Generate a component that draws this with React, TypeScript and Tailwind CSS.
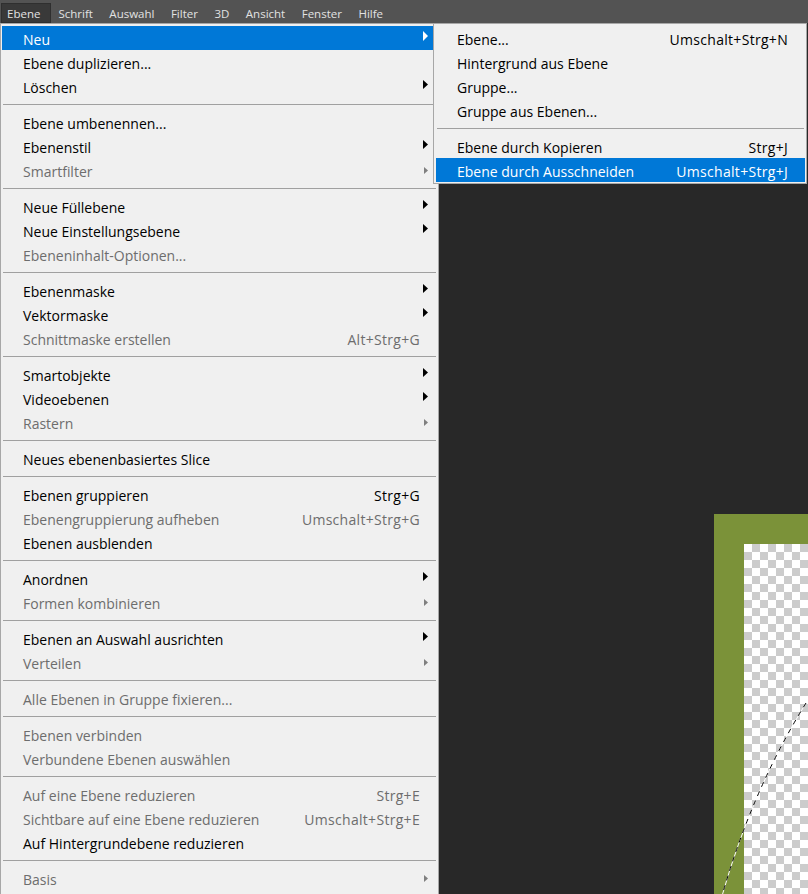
import React from "react";

type Row = { label: string; sc?: string; sub?: boolean; dis?: boolean; hl?: boolean };
type Entry = Row | "sep";

const mainItems: Entry[] = [
  { label: "Neu", sub: true, hl: true },
  { label: "Ebene duplizieren..." },
  { label: "Löschen", sub: true },
  "sep",
  { label: "Ebene umbenennen..." },
  { label: "Ebenenstil", sub: true },
  { label: "Smartfilter", sub: true, dis: true },
  "sep",
  { label: "Neue Füllebene", sub: true },
  { label: "Neue Einstellungsebene", sub: true },
  { label: "Ebeneninhalt-Optionen...", dis: true },
  "sep",
  { label: "Ebenenmaske", sub: true },
  { label: "Vektormaske", sub: true },
  { label: "Schnittmaske erstellen", sc: "Alt+Strg+G", dis: true },
  "sep",
  { label: "Smartobjekte", sub: true },
  { label: "Videoebenen", sub: true },
  { label: "Rastern", sub: true, dis: true },
  "sep",
  { label: "Neues ebenenbasiertes Slice" },
  "sep",
  { label: "Ebenen gruppieren", sc: "Strg+G" },
  { label: "Ebenengruppierung aufheben", sc: "Umschalt+Strg+G", dis: true },
  { label: "Ebenen ausblenden" },
  "sep",
  { label: "Anordnen", sub: true },
  { label: "Formen kombinieren", sub: true, dis: true },
  "sep",
  { label: "Ebenen an Auswahl ausrichten", sub: true },
  { label: "Verteilen", sub: true, dis: true },
  "sep",
  { label: "Alle Ebenen in Gruppe fixieren...", dis: true },
  "sep",
  { label: "Ebenen verbinden", dis: true },
  { label: "Verbundene Ebenen auswählen", dis: true },
  "sep",
  { label: "Auf eine Ebene reduzieren", sc: "Strg+E", dis: true },
  { label: "Sichtbare auf eine Ebene reduzieren", sc: "Umschalt+Strg+E", dis: true },
  { label: "Auf Hintergrundebene reduzieren" },
  "sep",
  { label: "Basis", sub: true, dis: true },
];

const subItems: Entry[] = [
  { label: "Ebene...", sc: "Umschalt+Strg+N" },
  { label: "Hintergrund aus Ebene" },
  { label: "Gruppe..." },
  { label: "Gruppe aus Ebenen..." },
  "sep",
  { label: "Ebene durch Kopieren", sc: "Strg+J" },
  { label: "Ebene durch Ausschneiden", sc: "Umschalt+Strg+J", hl: true },
];

function Arrow({ row }: { row: Row }) {
  if (row.dis) {
    return (
      <svg width="4" height="7" viewBox="0 0 4 7" className="mt-[9px] ml-[4px] block">
        <polygon points="0,0 4,3.5 0,7" fill="#7f7f7f" />
      </svg>
    );
  }
  if (row.hl) {
    return (
      <svg width="5" height="10" viewBox="0 0 5 10" className="mt-[5px] ml-[3px] block">
        <polygon points="0,0 5,5 0,10" fill="#ffffff" />
      </svg>
    );
  }
  return (
    <svg width="5" height="9" viewBox="0 0 5 9" className="mt-[6px] ml-[3px] block">
      <polygon points="0,0 5,4.5 0,9" fill="#000000" />
    </svg>
  );
}

function MenuRow({ row, main }: { row: Row; main: boolean }) {
  const color = row.hl ? "text-white" : row.dis ? "text-[#6d6d6d]" : "text-black";
  const bg = row.hl ? "bg-[#0078d7]" : "";
  return (
    <div className={`flex h-[24px] items-start pl-[21px] ${main ? "pr-[1px]" : "pr-[17px]"} ${bg} ${color}`}>
      <span className="flex-1 whitespace-nowrap leading-[27px]">{row.label}</span>
      {row.sc && <span className="whitespace-nowrap leading-[27px] tracking-[0.3px]">{row.sc}</span>}
      {main && <span className="w-[16px] h-[24px] flex items-start">{row.sub && <Arrow row={row} />}</span>}
    </div>
  );
}

function Separator() {
  return (
    <div className="h-[12px] flex items-center px-[1px]">
      <div className="h-[1px] w-full bg-[#a0a0a0]" />
    </div>
  );
}

export default function App() {
  const bar = ["Schrift", "Auswahl", "Filter", "3D", "Ansicht", "Fenster", "Hilfe"];
  return (
    <div className="relative w-[808px] h-[894px] overflow-hidden bg-[#282828] font-['Open_Sans','Liberation_Sans',sans-serif]">
      {/* Menu bar */}
      <div className="h-[23px] bg-[#535353] flex items-start pl-[2px] text-[11.5px] text-[#e2e2e2]">
        <div className="mt-[4px] h-[18px] leading-[20px] pl-[5px] pr-[10px] bg-[#393939] outline outline-1 outline-[#2f2f2f]">
          Ebene
        </div>
        {bar.map((b) => (
          <div key={b} className="mt-[4px] h-[18px] leading-[20px] pl-[8px] pr-[8.5px]">
            {b}
          </div>
        ))}
      </div>

      {/* Document canvas */}
      <div className="absolute left-[714px] top-[514px] w-[200px] h-[500px] bg-[#7b9239] p-[30px]">
        <div className="w-full h-full bg-[conic-gradient(#cccccc_0_25%,#ffffff_0_50%,#cccccc_0_75%,#ffffff_0)] bg-[length:16px_16px]" />
      </div>
      <svg className="absolute left-0 top-0 pointer-events-none" width="808" height="894">
        <path d="M 806 703 Q 752 790 722 896" fill="none" stroke="#ffffff" strokeWidth="1" />
        <path d="M 806 703 Q 752 790 722 896" fill="none" stroke="#000000" strokeWidth="1" strokeDasharray="5 5" />
      </svg>

      {/* Main menu */}
      <div className="absolute left-0 top-[23px] w-[439px] h-[900px] bg-[#f0f0f0] border border-[#a7a7a7] pt-[2px] px-[1px] text-[14px]">
        {mainItems.map((e, i) => (e === "sep" ? <Separator key={i} /> : <MenuRow key={i} row={e} main />))}
      </div>

      {/* Submenu */}
      <div className="absolute left-[433px] top-[23px] w-[374px] bg-[#f0f0f0] border border-[#a7a7a7] pt-[2px] pb-[1px] pl-[2px] pr-[1px] text-[14px]">
        {subItems.map((e, i) => (e === "sep" ? <Separator key={i} /> : <MenuRow key={i} row={e} main={false} />))}
      </div>
    </div>
  );
}
